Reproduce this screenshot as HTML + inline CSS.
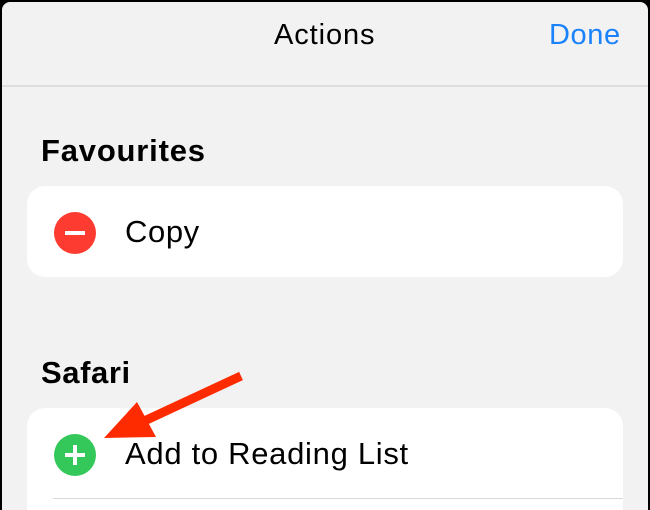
<!DOCTYPE html>
<html><head><style>
html,body{margin:0;padding:0;overflow:hidden;width:650px;height:510px}
body{background:#000;font-family:"Liberation Sans",sans-serif;position:relative}
.bg{position:absolute;left:2px;top:2px;width:646px;height:508px;background:#f2f2f2;border-radius:8px 8px 0 0;overflow:hidden}
.t{position:absolute;white-space:nowrap}
.card{position:absolute;background:#fff;border-radius:18px}
.c{position:absolute;width:42px;height:42px;border-radius:50%}
</style></head><body>
<div class="bg"></div>
<div class="t" style="left:274px;top:19px;font-size:29px;letter-spacing:0.9px;color:#000">Actions</div>
<div class="t" style="left:549px;top:19px;font-size:29px;letter-spacing:0.6px;color:#1a82fb">Done</div>
<div style="position:absolute;left:2px;top:85px;width:646px;height:2px;background:#dedede"></div>
<div class="t" style="left:41px;top:133px;font-size:31px;letter-spacing:0.8px;font-weight:bold">Favourites</div>
<div class="card" style="left:27px;top:186px;width:596px;height:91px"></div>
<div class="c" style="left:54px;top:212px;background:#fd3b30"></div>
<div style="position:absolute;left:65px;top:231px;width:20px;height:4px;background:#fff"></div>
<div class="t" style="left:125px;top:214px;font-size:31px;letter-spacing:0.6px">Copy</div>
<div class="t" style="left:41px;top:355px;font-size:31px;letter-spacing:0.6px;font-weight:bold">Safari</div>
<div class="card" style="left:27px;top:408px;width:596px;height:102px;border-radius:18px 18px 0 0"></div>
<div class="c" style="left:54px;top:434px;background:#34c759"></div>
<div style="position:absolute;left:65px;top:453px;width:20px;height:4px;background:#fff"></div>
<div style="position:absolute;left:73px;top:445px;width:4px;height:20px;background:#fff"></div>
<div class="t" style="left:125px;top:436px;font-size:31px;letter-spacing:0.7px">Add to Reading List</div>
<div style="position:absolute;left:53px;top:498px;width:570px;height:1px;background:#d8d8d8"></div>
<svg style="position:absolute;left:0;top:0" width="650" height="510">
<line x1="241" y1="376" x2="140" y2="423" stroke="#fe2a00" stroke-width="9"/>
<polygon points="104,438 137,402 156,437" fill="#fe2a00"/>
</svg>
</body></html>
